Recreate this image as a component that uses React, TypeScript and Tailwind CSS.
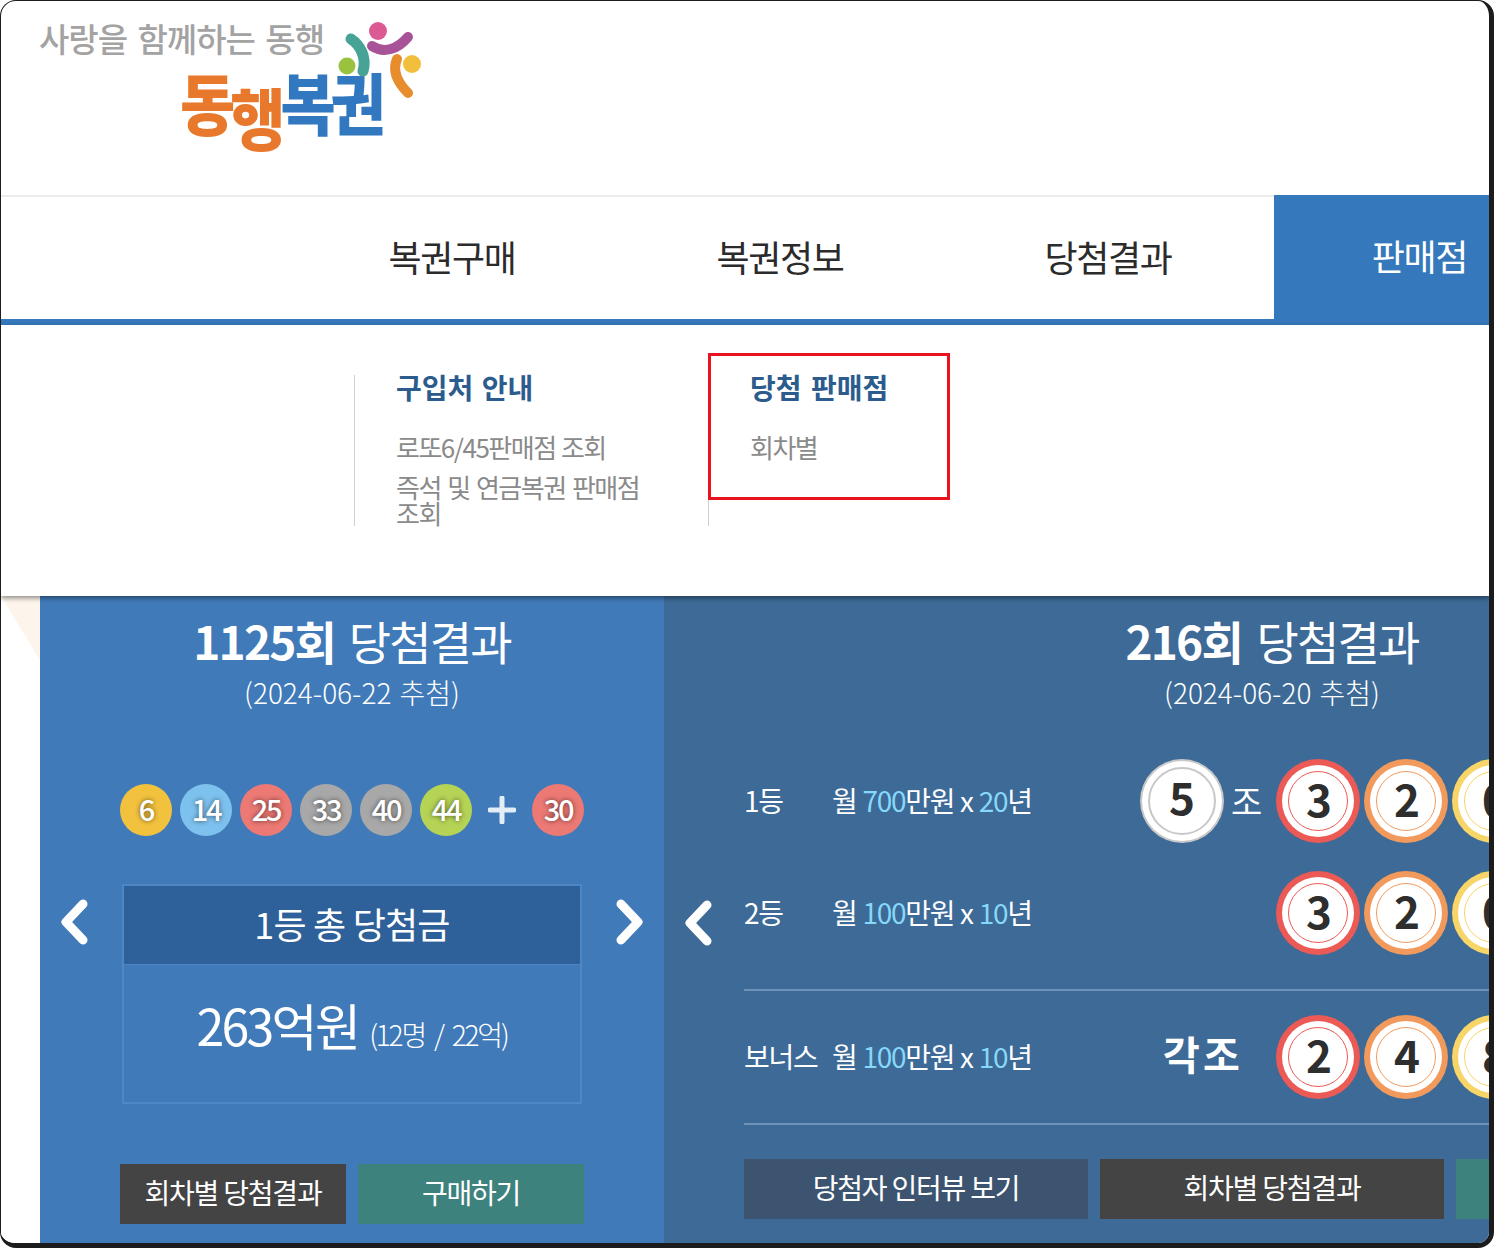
import React from "react";

const font = { fontFamily: '"Noto Sans CJK KR", "Noto Sans", sans-serif' };

function Chevron({ dir }: { dir: "left" | "right" }) {
  return (
    <svg width="30" height="46" viewBox="0 0 30 46" className="shrink-0">
      <path
        d={dir === "left" ? "M24 5 L7 23 L24 41" : "M6 5 L23 23 L6 41"}
        fill="none"
        stroke="#ffffff"
        strokeWidth="9"
        strokeLinecap="round"
        strokeLinejoin="round"
      />
    </svg>
  );
}

function SmallBall({ n, c }: { n: string; c: string }) {
  return (
    <div
      className={`w-[52px] h-[52px] rounded-full flex items-center justify-center shrink-0 text-white text-[29px] font-medium tracking-[-2.2px] pb-[2px] [text-shadow:0_0_5px_rgba(0,0,0,0.6)] ${c}`}
    >
      {n}
    </div>
  );
}

function Ring({ n, tone }: { n: string; tone: "red" | "orange" | "yellow" | "white" }) {
  const outer = {
    red: "bg-[#ec5a56]",
    orange: "bg-[#f19a5c]",
    yellow: "bg-[#f7d568]",
    white: "bg-[#c8c8c8]",
  }[tone];
  const inner = {
    red: "border-[#ec5a56] border-[1.5px]",
    orange: "border-[#f19a5c] border-[1.5px]",
    yellow: "border-[#f7d568] border-[1.5px]",
    white: "border-[#c8c8c8] border-2",
  }[tone];
  const pad = tone === "white" ? "p-[2px]" : "p-[6px]";
  const digit = tone === "white" ? "pb-[10px]" : "pb-[6px] pl-[2px]";
  return (
    <div className={`w-[84px] h-[84px] rounded-full shrink-0 ${outer} ${pad}`}>
      <div className="w-full h-full rounded-full bg-white p-[6px]">
        <div
          className={`w-full h-full rounded-full ${inner} flex items-center justify-center text-[44px] font-bold text-[#2e2e2e] leading-none ${digit}`}
        >
          {n}
        </div>
      </div>
    </div>
  );
}

function Prize({ rank, a, b }: { rank: string; a: string; b: string }) {
  return (
    <div className="flex items-center w-[396px] shrink-0 text-white text-[28px] tracking-[-1.3px] [word-spacing:1px] pb-[2px]">
      <span className="w-[88px]">{rank}</span>
      <span>
        월 <span className="text-[#86d8fa]">{a}</span>만원 x <span className="text-[#86d8fa]">{b}</span>년
      </span>
    </div>
  );
}

function Btn({ w, c, t }: { w: string; c: string; t: string }) {
  return (
    <div
      className={`${w} h-[60px] ${c} shrink-0 flex items-center justify-center text-white text-[28px] tracking-[-1.2px] pb-[5px]`}
    >
      {t}
    </div>
  );
}

function LogoMark() {
  return (
    <svg width="90" height="84" viewBox="0 0 90 84" className="absolute left-[335px] top-[20px]">
      <circle cx="42" cy="10" r="9" fill="#dc5a93" />
      <path d="M36 25 C 48 33, 62 28, 72 16" fill="none" stroke="#a85297" strokeWidth="10" strokeLinecap="round" />
      <path d="M15 18 C 24 24, 31 36, 27 50" fill="none" stroke="#46a396" strokeWidth="11" strokeLinecap="round" />
      <circle cx="11" cy="45" r="8.5" fill="#99c23f" />
      <circle cx="76" cy="43" r="9" fill="#f2bf3d" />
      <path d="M61 38 C 56 50, 62 62, 72 72" fill="none" stroke="#e78d2e" strokeWidth="10" strokeLinecap="round" />
    </svg>
  );
}

export default function App() {
  return (
    <div className="w-[1494px] h-[1248px] bg-white overflow-hidden" style={font}>
      <div className="w-full h-full flex flex-col bg-white rounded-[16px] overflow-hidden border-t border-l border-r-[5px] border-b-[5px] border-[#1c1c1c]">
        {/* header */}
        <div className="relative h-[194px] shrink-0 pl-[38px] pt-[13px]">
          <div className="text-[33px] leading-[48px] text-[#a3a3a3] font-medium tracking-[-1px] [word-spacing:4px]">
            사랑을 함께하는 동행
          </div>
          <div className="flex pl-[141px] mt-[2px] origin-top scale-y-[1.12] text-[60px] leading-[66px] font-black tracking-[-5px]">
            <span className="text-[#e8782b]">동</span>
            <span className="text-[#e8782b] translate-y-[13px]">행</span>
            <span className="text-[#3278c0]">복권</span>
          </div>
          <LogoMark />
        </div>

        {/* nav */}
        <div className="h-[130px] shrink-0 flex border-b-[6px] border-[#3578bc]">
          <div className="flex w-[1273px] shrink-0 border-t-2 border-[#ececec] pl-[287px]">
            {["복권구매", "복권정보", "당첨결과"].map((t) => (
              <div
                key={t}
                className="w-[328px] shrink-0 flex items-center justify-center text-[36px] text-[#2b2b2b] tracking-[-1.4px] pb-[5px]"
              >
                {t}
              </div>
            ))}
          </div>
          <div className="flex-1 bg-[#3578bc] flex items-center justify-end pr-[22px] text-white text-[36px] tracking-[-1.4px] pb-[4px]">
            판매점
          </div>
        </div>

        {/* mega menu */}
        <div className="relative z-10 h-[271px] shrink-0 bg-white pl-[353px] pt-[50px] flex items-start shadow-[0_2px_5px_rgba(0,0,0,0.45)]">
          <div className="w-[354px] h-[151px] shrink-0 border-l border-[#cfcfcf] pl-[41px] pr-[60px]">
            <div className="-mt-[2px] text-[28px] leading-[28px] font-bold text-[#2c5b8e] tracking-[0px] [word-spacing:2px]">
              구입처 안내
            </div>
            <div className="mt-[33px] text-[26px] leading-[26px] text-[#8a8a8a] tracking-[-1.5px] [word-spacing:1px]">
              로또6/45판매점 조회
            </div>
            <div className="mt-[14px] text-[26px] leading-[26px] text-[#8a8a8a] tracking-[-1.5px] [word-spacing:2px]">
              즉석 및 연금복권 판매점 조회
            </div>
          </div>
          <div className="relative w-[354px] h-[151px] shrink-0 border-l border-[#cfcfcf] pl-[41px]">
            <div className="-mt-[2px] text-[28px] leading-[28px] font-bold text-[#2c5b8e] tracking-[0px] [word-spacing:3px]">
              당첨 판매점
            </div>
            <div className="mt-[33px] text-[26px] leading-[26px] text-[#8a8a8a] tracking-[-1.5px]">회차별</div>
            <div className="absolute -left-[1px] -top-[22px] w-[242px] h-[147px] border-[3px] border-[#e8131f]" />
          </div>
        </div>

        {/* results */}
        <div className="flex-1 min-h-0 flex overflow-hidden">
          <div className="w-[39px] shrink-0 bg-white">
            <svg width="39" height="70" viewBox="0 0 39 70">
              <polygon points="0,0 39,0 39,64" fill="#fdf4ec" />
            </svg>
          </div>

          {/* left panel */}
          <div className="w-[624px] shrink-0 bg-[#407ab8] flex flex-col items-center pt-[15px]">
            <div className="text-[46px] leading-[58px] text-white tracking-[-1.8px] [word-spacing:5px]">
              <span className="font-bold">1125회</span> 당첨결과
            </div>
            <div className="mt-[5px] text-[28px] leading-[36px] text-white font-light tracking-[0px] [word-spacing:2px]">
              (2024-06-22 추첨)
            </div>
            <div className="mt-[74px] flex items-center gap-[8px]">
              <SmallBall n="6" c="bg-[#f2c23e]" />
              <SmallBall n="14" c="bg-[#7dc1ee]" />
              <SmallBall n="25" c="bg-[#ec7974]" />
              <SmallBall n="33" c="bg-[#a8a8a8]" />
              <SmallBall n="40" c="bg-[#a8a8a8]" />
              <SmallBall n="44" c="bg-[#b5d355]" />
              <svg width="28" height="28" viewBox="0 0 28 28" className="mx-[8px]">
                <path d="M14 2 V26 M2 14 H26" stroke="#e3edf5" strokeWidth="5" strokeLinecap="round" />
              </svg>
              <SmallBall n="30" c="bg-[#ec7974]" />
            </div>
            <div className="mt-[48px] w-full flex items-start pl-[19px]">
              <div className="pt-[15px]">
                <Chevron dir="left" />
              </div>
              <div className="ml-[33px] mr-[33px] w-[460px] h-[220px] shrink-0 border-2 border-[#4f86c4] flex flex-col">
                <div className="h-[79px] shrink-0 bg-[#2e6099] border-b border-[#4f86c4] flex items-center justify-center text-white text-[36px] tracking-[-0.8px] pb-[5px]">
                  1등 총 당첨금
                </div>
                <div className="flex items-baseline justify-center pt-[27px] text-white">
                  <span className="text-[50px] leading-[64px] tracking-[-2.7px]">263억원</span>
                  <span className="ml-[11px] text-[28px] tracking-[-2.2px] font-light [word-spacing:5px]">(12명 / 22억)</span>
                </div>
              </div>
              <div className="pt-[15px]">
                <Chevron dir="right" />
              </div>
            </div>
            <div className="mt-[60px] flex gap-[12px]">
              <Btn w="w-[226px]" c="bg-[#444444]" t="회차별 당첨결과" />
              <Btn w="w-[226px]" c="bg-[#3d827d]" t="구매하기" />
            </div>
          </div>

          {/* right panel */}
          <div className="flex-1 min-w-0 bg-[#3d6a97] flex overflow-hidden pl-[19px]">
            <div className="shrink-0 pt-[304px] w-[61px]">
              <Chevron dir="left" />
            </div>
            <div className="w-[1056px] shrink-0 flex flex-col">
              <div className="pt-[15px] text-center text-[46px] leading-[58px] text-white tracking-[-1.8px] [word-spacing:6px]">
                <span className="font-bold">216회</span> 당첨결과
              </div>
              <div className="mt-[5px] text-center text-[28px] leading-[36px] text-white font-light tracking-[0px] [word-spacing:2px]">
                (2024-06-20 추첨)
              </div>
              <div className="mt-[49px] h-[84px] flex items-center">
                <Prize rank="1등" a="700" b="20" />
                <Ring n="5" tone="white" />
                <span className="w-[52px] pl-[7px] text-white text-[34px] pb-[2px]">조</span>
                <div className="flex gap-[4px]">
                  <Ring n="3" tone="red" />
                  <Ring n="2" tone="orange" />
                  <Ring n="0" tone="yellow" />
                </div>
              </div>
              <div className="mt-[28px] h-[84px] flex items-center">
                <Prize rank="2등" a="100" b="10" />
                <div className="w-[136px] shrink-0" />
                <div className="flex gap-[4px]">
                  <Ring n="3" tone="red" />
                  <Ring n="2" tone="orange" />
                  <Ring n="0" tone="yellow" />
                </div>
              </div>
              <div className="mt-[34px] h-[2px] bg-[#6f93b8]" />
              <div className="mt-[24px] h-[84px] flex items-center">
                <Prize rank="보너스" a="100" b="10" />
                <span className="w-[136px] shrink-0 text-[40px] font-bold text-white pl-[23px] pb-[8px] [word-spacing:-6px]">
                  각 조
                </span>
                <div className="flex gap-[4px]">
                  <Ring n="2" tone="red" />
                  <Ring n="4" tone="orange" />
                  <Ring n="8" tone="yellow" />
                </div>
              </div>
              <div className="mt-[24px] h-[2px] bg-[#6f93b8]" />
              <div className="mt-[34px] flex gap-[12px]">
                <Btn w="w-[344px]" c="bg-[#3c5470]" t="당첨자 인터뷰 보기" />
                <Btn w="w-[344px]" c="bg-[#444444]" t="회차별 당첨결과" />
                <Btn w="w-[344px]" c="bg-[#3d827d]" t="구매하기" />
              </div>
            </div>
          </div>
        </div>
      </div>
    </div>
  );
}
